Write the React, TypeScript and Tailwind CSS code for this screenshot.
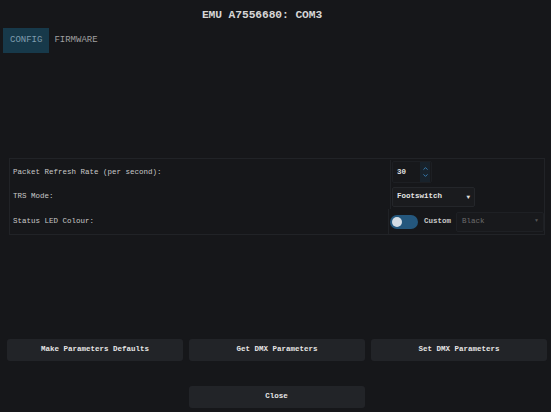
import { ChevronUp, ChevronDown } from "lucide-react"

const mono = "font-['Liberation_Mono','DejaVu_Sans_Mono',monospace]"

function Row({ label, children }: { label: string; children: React.ReactNode }) {
  return (
    <div className="flex h-[25px]">
      <div className="w-[380px] flex items-center pl-[3px] text-[7.5px] text-[#c8c8c8]">{label}</div>
      <div className="flex-1 flex items-center border-l border-[#202226] pl-[1px]">{children}</div>
    </div>
  )
}

export default function App() {
  return (
    <div className={`w-[551px] h-[412px] bg-[#16171a] flex flex-col overflow-hidden ${mono}`}>
      {/* title */}
      <div className="h-[28px] flex items-center justify-center pt-[2px] pr-[27px]">
        <span className="text-[11.3px] font-bold text-[#d6d6d6] tracking-[-0.1px]">EMU A7556680: COM3</span>
      </div>

      {/* tabs */}
      <div className="flex items-stretch h-[25px] pl-[3px] gap-[2px]">
        <div className="bg-[#17394a] px-[7px] flex items-center text-[9px] text-[#7f9daf]">CONFIG</div>
        <div className="px-[3px] flex items-center text-[9px] text-[#a0a0a0]">FIRMWARE</div>
      </div>

      {/* settings table */}
      <div className="mt-[105px] ml-[9px] mr-[6px] border border-[#212327] h-[77px] flex flex-col pt-[1px]">
        <Row label="Packet Refresh Rate (per second):">
          <div className="w-[40px] h-[22px] flex items-center justify-between bg-[#17181b] border border-[#1d1f23] rounded-[2px]">
            <span className="pl-[4px] text-[7.5px] font-bold text-[#e0e0e0]">30</span>
            <div className="flex flex-col items-center justify-center h-full w-[10px] bg-[#18222b] mr-[1px]">
              <ChevronUp className="w-[7px] h-[7px] text-[#3a86c0]" strokeWidth={3} />
              <ChevronDown className="w-[7px] h-[7px] text-[#3a86c0]" strokeWidth={3} />
            </div>
          </div>
        </Row>
        <Row label="TRS Mode:">
          <div className="w-[83px] h-[20px] flex items-center justify-between bg-[#1a1b1e] border border-[#24262a] rounded-[2px] px-[4px]">
            <span className="text-[7.5px] font-bold text-[#e4e4e4]">Footswitch</span>
            <span className="text-[6px] text-[#e0e0e0]">▼</span>
          </div>
        </Row>
        <Row label="Status LED Colour:">
          <div className="flex items-center w-full">
            <div className="w-[28px] h-[14px] rounded-full bg-[#24577d] flex items-center pl-[2px]">
              <div className="w-[10px] h-[10px] rounded-full bg-[#d4dce4]" />
            </div>
            <span className="ml-[6px] text-[7.5px] font-bold text-[#c8c8c8]">Custom</span>
            <div className="ml-[5px] w-[88px] h-[20px] flex items-center justify-between bg-[#18191c] border border-[#1e2024] rounded-[2px] px-[5px]">
              <span className="text-[7.5px] text-[#6c6c6c]">Black</span>
              <span className="text-[5px] text-[#555]">▼</span>
            </div>
          </div>
        </Row>
      </div>

      {/* action buttons */}
      <div className="mt-[104px] flex pl-[7px] pr-[3px] gap-[6px]">
        {["Make Parameters Defaults", "Get DMX Parameters", "Set DMX Parameters"].map((t) => (
          <div key={t} className="w-[176px] h-[22px] rounded-[3px] bg-[#222428] flex items-center justify-center text-[7.5px] font-bold text-[#e6e6e6]">
            {t}
          </div>
        ))}
      </div>

      <div className="mt-[25px] flex justify-center">
        <div className="w-[176px] h-[22px] rounded-[3px] bg-[#222428] flex items-center justify-center text-[7.5px] font-bold text-[#e6e6e6] ml-[2px]">
          Close
        </div>
      </div>
    </div>
  )
}
